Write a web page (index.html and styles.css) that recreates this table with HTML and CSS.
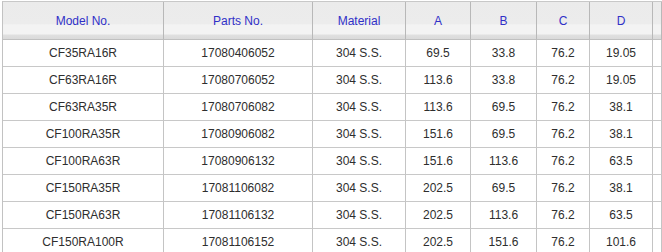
FILE: index.html
```html
<!DOCTYPE html>
<html>
<head>
<meta charset="utf-8">
<link rel="stylesheet" href="styles.css">
</head>
<body>
<table class="spec">
  <thead>
    <tr>
      <th class="c-model">Model No.</th>
      <th class="c-parts">Parts No.</th>
      <th class="c-mat">Material</th>
      <th class="c-a">A</th>
      <th class="c-b">B</th>
      <th class="c-c">C</th>
      <th class="c-d">D</th>
      <th class="c-e"></th>
    </tr>
  </thead>
  <tbody>
    <tr><td>CF35RA16R</td><td>17080406052</td><td>304 S.S.</td><td>69.5</td><td>33.8</td><td>76.2</td><td>19.05</td><td></td></tr>
    <tr><td>CF63RA16R</td><td>17080706052</td><td>304 S.S.</td><td>113.6</td><td>33.8</td><td>76.2</td><td>19.05</td><td></td></tr>
    <tr><td>CF63RA35R</td><td>17080706082</td><td>304 S.S.</td><td>113.6</td><td>69.5</td><td>76.2</td><td>38.1</td><td></td></tr>
    <tr><td>CF100RA35R</td><td>17080906082</td><td>304 S.S.</td><td>151.6</td><td>69.5</td><td>76.2</td><td>38.1</td><td></td></tr>
    <tr><td>CF100RA63R</td><td>17080906132</td><td>304 S.S.</td><td>151.6</td><td>113.6</td><td>76.2</td><td>63.5</td><td></td></tr>
    <tr><td>CF150RA35R</td><td>17081106082</td><td>304 S.S.</td><td>202.5</td><td>69.5</td><td>76.2</td><td>38.1</td><td></td></tr>
    <tr><td>CF150RA63R</td><td>17081106132</td><td>304 S.S.</td><td>202.5</td><td>113.6</td><td>76.2</td><td>63.5</td><td></td></tr>
    <tr><td>CF150RA100R</td><td>17081106152</td><td>304 S.S.</td><td>202.5</td><td>151.6</td><td>76.2</td><td>101.6</td><td></td></tr>
  </tbody>
</table>
</body>
</html>
```
FILE: styles.css
```css
html, body {
  margin: 0;
  padding: 0;
  background: #ffffff;
  overflow: hidden;
}
body {
  font-family: "Liberation Sans", Arial, sans-serif;
  font-size: 12px;
  color: #2e2e2e;
}
.spec {
  margin: 1px 0 0 2px;
  border-collapse: separate;
  border-spacing: 0;
  table-layout: fixed;
  width: 660px;
  border-left: 1px solid #c2c2c2;
  border-top: 1px solid #c8c8c8;
}
.spec th,
.spec td {
  box-sizing: border-box;
  padding: 0;
  text-align: center;
  vertical-align: middle;
  border-right: 1px solid #c4c4c4;
  border-bottom: 1px solid #c8c8c8;
  white-space: nowrap;
  overflow: hidden;
}
.spec th {
  height: 38px;
  font-weight: normal;
  color: #3030c8;
  background: linear-gradient(to bottom,
    #ebebeb 0%, #ececec 58%,
    #f3f3f3 62%, #f3f3f3 86%,
    #dfdfdf 90%, #dadada 100%);
  border-right-color: #b8b8b8;
  border-bottom-color: #c0c0c0;
}
.spec td {
  height: 27px;
}
.c-model { width: 161px; }
.c-parts { width: 149px; }
.c-mat { width: 93px; }
.c-a { width: 65px; }
.c-b { width: 66px; }
.c-c { width: 53px; }
.c-d { width: 63px; }
.c-e { width: 9px; border-right: none; }
```
